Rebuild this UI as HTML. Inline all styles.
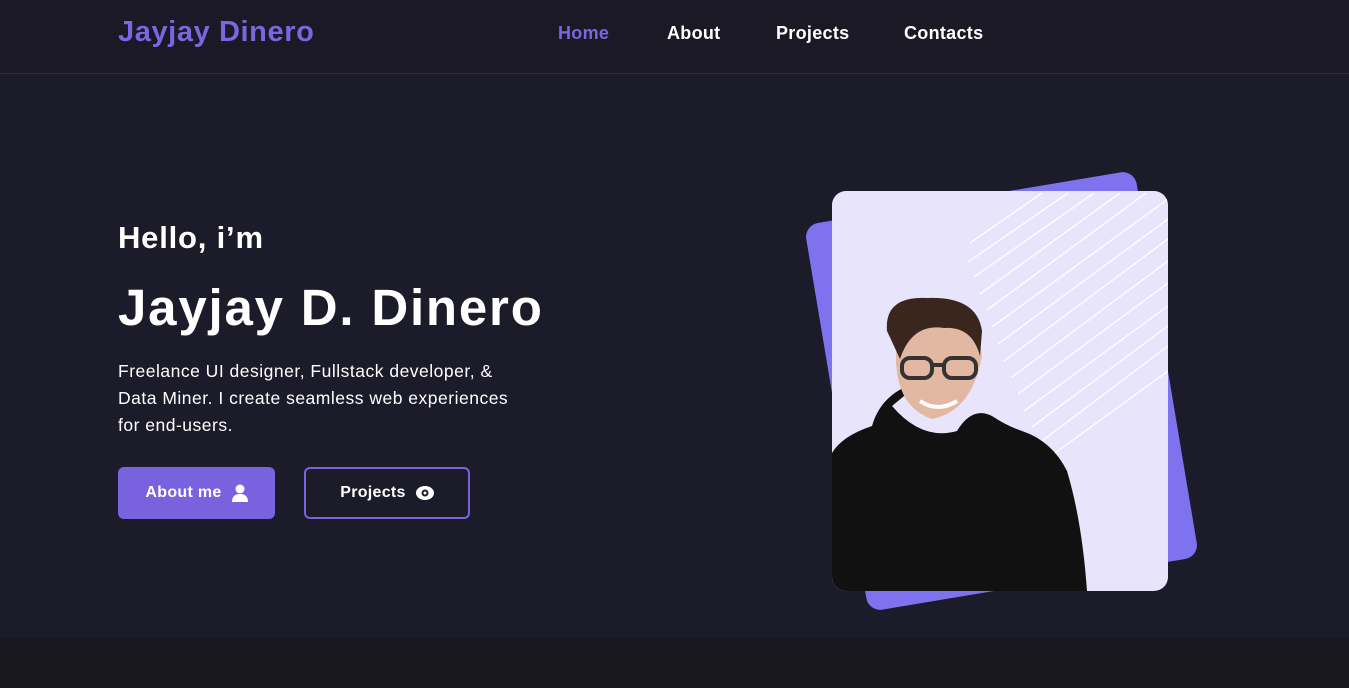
<!DOCTYPE html>
<html><head><meta charset="utf-8"><style>
*{margin:0;padding:0;box-sizing:border-box}
body{width:1349px;height:688px;background:#18171f;font-family:"Liberation Sans",sans-serif;position:relative;overflow:hidden;color:#fff}
.hdr{position:absolute;left:0;top:0;width:1349px;height:74px;background:#1a1925;border-bottom:1px solid #2c2b3a}
.logo{position:absolute;left:118px;top:16px;font-size:29px;font-weight:bold;color:#7b66e0;letter-spacing:0.6px}
.nav{position:absolute;top:23px;font-size:18px;font-weight:bold;letter-spacing:0.3px}
.hero{position:absolute;left:0;top:74px;width:1349px;height:564px;background:#1c1b2a}
h2{position:absolute;left:118px;top:220px;font-size:31px;font-weight:bold;letter-spacing:0.8px}
h1{position:absolute;left:118px;top:278px;font-size:51px;font-weight:bold;letter-spacing:1.8px}
p{position:absolute;left:118px;top:358px;font-size:17.5px;line-height:27px;width:480px;letter-spacing:0.5px;white-space:nowrap}
.b1{position:absolute;left:118px;top:467px;width:157px;height:52px;background:#7862dd;border-radius:6px;font-size:16px;font-weight:bold;display:flex;align-items:center;justify-content:center;gap:10px;letter-spacing:0.3px}
.b2{position:absolute;left:304px;top:467px;width:166px;height:52px;border:2px solid #7862dd;border-radius:6px;font-size:16px;font-weight:bold;display:flex;align-items:center;justify-content:center;gap:10px;letter-spacing:0.3px}
.back{position:absolute;left:834px;top:195px;width:335px;height:392px;background:#7f72ee;border-radius:14px;transform:rotate(-9.5deg)}
.card{position:absolute;left:832px;top:191px;width:336px;height:400px;background:#e8e4fc;border-radius:14px;overflow:hidden}
</style></head><body>
<div class="hdr">
<div class="logo">Jayjay Dinero</div>
<div class="nav" style="left:558px;color:#7b66e0">Home</div>
<div class="nav" style="left:667px">About</div>
<div class="nav" style="left:776px">Projects</div>
<div class="nav" style="left:904px">Contacts</div>
</div>
<div class="hero"></div>
<h2>Hello, i’m</h2>
<h1>Jayjay D. Dinero</h1>
<p>Freelance UI designer, Fullstack developer, &amp;<br>Data Miner. I create seamless web experiences<br>for end-users.</p>
<div class="b1">About me <svg width="16" height="18" viewBox="0 0 16 18"><circle cx="8" cy="5" r="4.5" fill="#fff"/><path d="M0 18 Q0 10 8 10 Q16 10 16 18Z" fill="#fff"/></svg></div>
<div class="b2">Projects <svg width="18" height="14" viewBox="0 0 18 14"><ellipse cx="9" cy="7" rx="9" ry="7" fill="#fff"/><circle cx="9" cy="7" r="3.5" fill="#1c1b2a"/><circle cx="9" cy="7" r="1.5" fill="#fff"/></svg></div>
<div class="back"></div>
<div class="card">
<svg width="336" height="400" viewBox="0 0 336 400">
<g stroke="#fff" stroke-width="1.5" opacity="0.9">
<line x1="138" y1="52" x2="210" y2="2"/><line x1="136" y1="71" x2="236" y2="2"/><line x1="142" y1="86" x2="262" y2="2"/><line x1="148" y1="103" x2="288" y2="2"/><line x1="155" y1="119" x2="314" y2="2"/><line x1="160" y1="136" x2="336" y2="8"/><line x1="166" y1="153" x2="336" y2="28"/><line x1="172" y1="170" x2="336" y2="48"/><line x1="180" y1="186" x2="336" y2="70"/><line x1="186" y1="203" x2="336" y2="92"/><line x1="192" y1="220" x2="336" y2="115"/><line x1="200" y1="236" x2="336" y2="135"/><line x1="206" y1="253" x2="336" y2="155"/><line x1="212" y1="270" x2="336" y2="180"/>
</g>
<path d="M0 262 Q10 245 40 235 Q50 200 90 190 L60 215 Q90 250 125 240 Q140 215 160 225 Q175 235 190 240 Q220 250 235 280 Q250 330 255 400 L0 400Z" fill="#111"/>
<path d="M64 160 Q62 215 100 228 Q140 220 150 165 L145 135 L70 135Z" fill="#e2b8a3"/>
<path d="M55 140 Q52 105 95 107 Q145 105 150 140 L148 165 Q140 135 112 137 Q80 132 68 168Z" fill="#3a261c"/>
<g fill="none" stroke="#333" stroke-width="4"><rect x="70" y="167" width="30" height="20" rx="8"/><rect x="112" y="167" width="32" height="20" rx="8"/><line x1="100" y1="174" x2="112" y2="174"/></g>
<path d="M88 210 Q106 222 125 210" stroke="#fff" stroke-width="4" fill="none"/>
</svg>
</div>
</body></html>
